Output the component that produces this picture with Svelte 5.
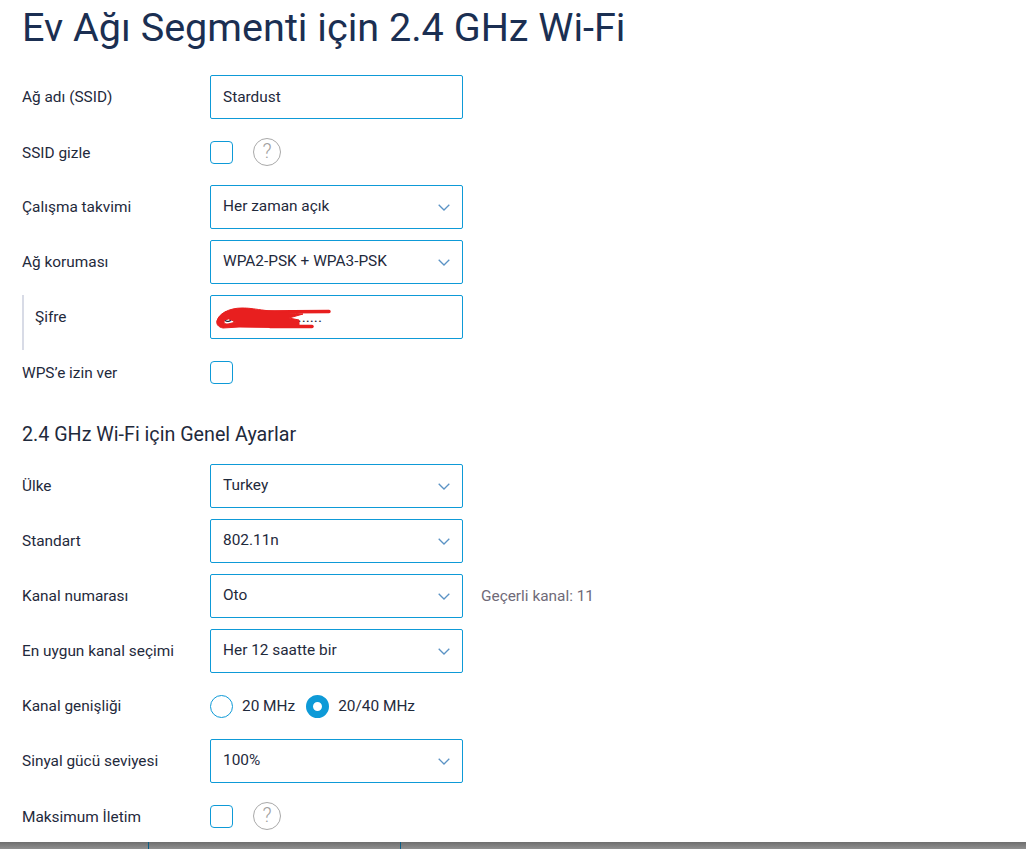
<script>
  const ssidRows = [
    { label: "Çalışma takvimi", value: "Her zaman açık" },
    { label: "Ağ koruması", value: "WPA2-PSK + WPA3-PSK" }
  ];
  const generalRows = [
    { label: "Ülke", value: "Turkey" },
    { label: "Standart", value: "802.11n" },
    { label: "Kanal numarası", value: "Oto", note: "Geçerli kanal: 11" },
    { label: "En uygun kanal seçimi", value: "Her 12 saatte bir" }
  ];
</script>

{#snippet select(value)}
  <div class="field select">
    <span class="val">{value}</span>
    <svg class="chev" width="12" height="7" viewBox="0 0 12 7"><path d="M.7.8 6 6l5.3-5.2" /></svg>
  </div>
{/snippet}

{#snippet help()}
  <span class="help">?</span>
{/snippet}

<main>
  <h1>Ev Ağı Segmenti için 2.4 GHz Wi-Fi</h1>

  <section class="rows">
    <div class="row">
      <span class="label">Ağ adı (SSID)</span>
      <div class="field">Stardust</div>
    </div>
    <div class="row">
      <span class="label low">SSID gizle</span>
      <span class="check"></span>
      {@render help()}
    </div>
    {#each ssidRows as r}
      <div class="row">
        <span class="label">{r.label}</span>
        {@render select(r.value)}
      </div>
    {/each}
    <div class="row sub">
      <span class="label">Şifre</span>
      <div class="field pass">
        <span>S........5............</span>
        <svg class="scribble" width="122" height="24" viewBox="0 0 122 24">
          <path class="thin" d="M42 6 114 5.500" />
          <path class="thin" d="M55 20.500 97 20.500" />
          <path
            class="fat"
            fill-rule="evenodd"
            d="M2 15C3 8 14 2 27 2 40 2 45 5 88 8L74 12 84 14 84 20 60 21.500 24 21 8 22C3 21 1 18 2 15ZM10 14C8 16 9 18 13 18L21 16 14 13Z"
          />
        </svg>
      </div>
    </div>
    <div class="row">
      <span class="label low">WPS’e izin ver</span>
      <span class="check"></span>
    </div>
  </section>

  <h2>2.4 GHz Wi-Fi için Genel Ayarlar</h2>

  <section class="rows">
    {#each generalRows as r}
      <div class="row">
        <span class="label">{r.label}</span>
        {@render select(r.value)}
        {#if r.note}<span class="note">{r.note}</span>{/if}
      </div>
    {/each}
    <div class="row">
      <span class="label">Kanal genişliği</span>
      <div class="radios">
        <span class="radio"></span><span class="rlabel">20 MHz</span>
        <span class="radio on"></span><span class="rlabel">20/40 MHz</span>
      </div>
    </div>
    <div class="row">
      <span class="label">Sinyal gücü seviyesi</span>
      {@render select("100%")}
    </div>
    <div class="row">
      <span class="label low">Maksimum İletim</span>
      <span class="check"></span>
      {@render help()}
    </div>
  </section>
</main>

<footer>
  <i></i>
  <i></i>
</footer>

<style>
  :global(body) {
    background: #fff;
    overflow: hidden;
  }
  main {
    padding: 0 22px;
    font-family: Roboto, sans-serif;
    font-size: 15.4px;
    color: #1f2a3c;
  }
  h1 {
    margin: 0;
    height: 75px;
    padding-top: 5px;
    box-sizing: border-box;
    font-size: 39.6px;
    line-height: 46px;
    font-weight: 400;
    color: #1b2f52;
  }
  h2 {
    margin: 0;
    height: 70px;
    padding-top: 30px;
    box-sizing: border-box;
    font-size: 19.7px;
    line-height: 22px;
    font-weight: 400;
    color: #1f2a3c;
  }
  .rows {
    display: flex;
    flex-direction: column;
    gap: 11px;
  }
  .row {
    display: flex;
    align-items: center;
    height: 44px;
  }
  .label {
    width: 188px;
    flex: none;
  }
  .label.low {
    padding-top: 2px;
  }
  .sub {
    height: 55px;
    margin-bottom: -11px;
    align-items: flex-start;
    border-left: 2px solid #d8dbe6;
    box-sizing: border-box;
  }
  .sub .label {
    width: 186px;
    padding-left: 11px;
    box-sizing: border-box;
    line-height: 44px;
  }
  .field {
    display: flex;
    align-items: center;
    justify-content: space-between;
    box-sizing: border-box;
    width: 253px;
    height: 44px;
    padding: 0 12px;
    border: 1px solid #0e9ad7;
    border-radius: 2px;
    background: #fff;
  }
  .val {
    margin-bottom: 2px;
  }
  .chev {
    fill: none;
    stroke: #5b93c5;
    stroke-width: 1.300;
  }
  .pass {
    position: relative;
  }
  .scribble {
    position: absolute;
    left: 4px;
    top: 10px;
    fill: none;
    stroke: #e81f1f;
    stroke-linecap: round;
  }
  .scribble .thin {
    stroke-width: 3.500px;
  }
  .scribble .fat {
    fill: #e81f1f;
    stroke-width: 1px;
  }
  .check {
    box-sizing: border-box;
    width: 23px;
    height: 23px;
    border: 1px solid #0e9ad7;
    border-radius: 4px;
  }
  .help {
    box-sizing: border-box;
    width: 28px;
    height: 28px;
    margin-left: 20px;
    border: 1.500px solid #a9a9a9;
    border-radius: 50%;
    color: #a0a0a0;
    font-size: 20px;
    line-height: 25px;
    text-align: center;
    font-weight: 300;
  }
  .note {
    margin-left: 18px;
    color: #6f6a78;
  }
  .radios {
    display: flex;
    align-items: center;
  }
  .radio {
    box-sizing: border-box;
    width: 23px;
    height: 23px;
    border: 1px solid #0e9ad7;
    border-radius: 50%;
  }
  .radio.on {
    border: 7.500px solid #0e9ad7;
  }
  .rlabel {
    margin: 0 11px 0 9px;
  }
  footer {
    display: flex;
    gap: 251px;
    height: 7px;
    margin-top: 4px;
    padding-left: 148px;
    background: linear-gradient(#6e6e6e, #909090);
  }
  footer i {
    width: 1px;
    background: #0d5f86;
  }
</style>
